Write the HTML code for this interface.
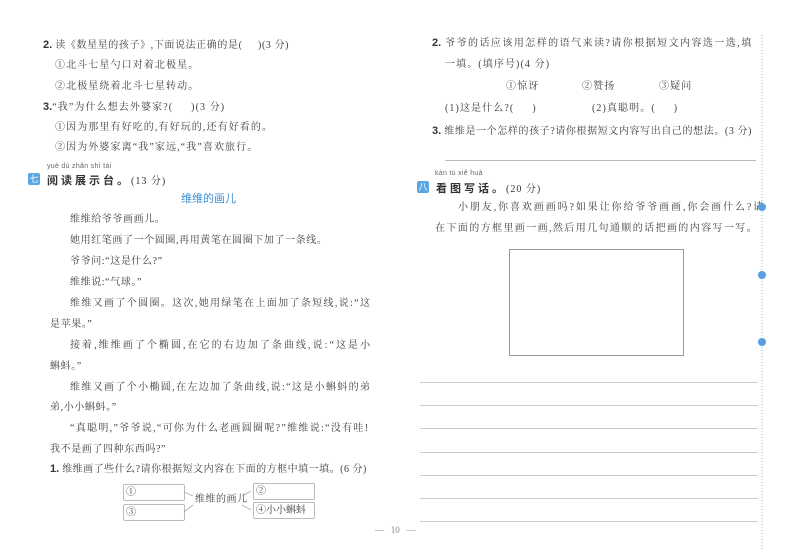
<!DOCTYPE html>
<html><head><meta charset="utf-8"><style>
body{margin:0;width:800px;height:554px;background:#fff;position:relative;overflow:hidden;font-family:"Liberation Serif","Noto Serif CJK SC",serif;color:#404040}
.t{position:absolute;white-space:nowrap;font-size:10px;line-height:12px}
.q{letter-spacing:1.1px}
.b{letter-spacing:0.6px}
.n{font-family:"Liberation Sans",sans-serif;font-weight:bold;color:#333;font-size:11px;letter-spacing:0}
.py{position:absolute;font-family:"Liberation Sans",sans-serif;font-size:7px;color:#666;white-space:nowrap;letter-spacing:0.3px}
.badge{position:absolute;width:12px;height:12px;background:#5aa6e0;color:#fff;font-size:9px;line-height:12px;text-align:center;border-radius:2px;font-family:"Noto Sans CJK SC",sans-serif}
.h{position:absolute;font-family:"Liberation Sans","Noto Sans CJK SC",sans-serif;font-weight:bold;font-size:11px;color:#333;letter-spacing:3px;white-space:nowrap}
.box{position:absolute;border:1px solid #bbb;border-radius:2px;height:15px;font-size:10px;line-height:15px;padding-left:2px}
.ln{position:absolute;left:420px;width:338px;height:1px;background:#ccc}
.dot{position:absolute;left:758px;width:8px;height:8px;border-radius:50%;background:#5a9ee0}
</style></head><body>
<div class="t q" style="left:43px;top:39px;letter-spacing:0.6px"><span class="n">2.</span> 读《数星星的孩子》,下面说法正确的是(&nbsp;&nbsp;&nbsp;&nbsp;&nbsp;)(3 分)</div>
<div class="t q" style="left:55px;top:60px">①北斗七星勺口对着北极星。</div>
<div class="t q" style="left:55px;top:81px">②北极星绕着北斗七星转动。</div>
<div class="t q" style="left:43px;top:101px"><span class="n">3.</span>“我”为什么想去外婆家?(&nbsp;&nbsp;&nbsp;&nbsp;&nbsp;)(3 分)</div>
<div class="t q" style="left:55px;top:122px">①因为那里有好吃的,有好玩的,还有好看的。</div>
<div class="t q" style="left:55px;top:142px">②因为外婆家离“我”家远,“我”喜欢旅行。</div>
<div class="py" style="left:47px;top:163px">yuè dú zhǎn shì tái</div>
<div class="badge" style="left:28px;top:173px">七</div>
<div class="h" style="left:47px;top:172px">阅读展示台。<span style="font-weight:normal;font-family:'Liberation Serif','Noto Serif CJK SC',serif;font-size:10px;letter-spacing:1px">(13 分)</span></div>
<div class="t" style="left:181px;top:193px;color:#3c8fd6;font-family:'Liberation Sans','Noto Sans CJK SC',sans-serif;font-size:11px">维维的画儿</div>
<div class="t b" style="left:70px;top:214px">维维给爷爷画画儿。</div>
<div class="t b" style="left:70px;top:235px">她用红笔画了一个圆圈,再用黄笔在圆圈下加了一条线。</div>
<div class="t b" style="left:70px;top:256px">爷爷问:“这是什么?”</div>
<div class="t b" style="left:70px;top:277px">维维说:“气球。”</div>
<div class="t b" style="left:70px;top:298px;letter-spacing:1.35px">维维又画了个圆圈。这次,她用绿笔在上面加了条短线,说:“这</div>
<div class="t b" style="left:50px;top:319px">是苹果。”</div>
<div class="t b" style="left:70px;top:340px;letter-spacing:2.05px">接着,维维画了个椭圆,在它的右边加了条曲线,说:“这是小</div>
<div class="t b" style="left:50px;top:361px">蝌蚪。”</div>
<div class="t b" style="left:70px;top:382px;letter-spacing:1.35px">维维又画了个小椭圆,在左边加了条曲线,说:“这是小蝌蚪的弟</div>
<div class="t b" style="left:50px;top:402px">弟,小小蝌蚪。”</div>
<div class="t b" style="left:70px;top:423px;letter-spacing:1.3px">“真聪明,”爷爷说,“可你为什么老画圆圈呢?”维维说:“没有哇!</div>
<div class="t b" style="left:50px;top:444px">我不是画了四种东西吗?”</div>
<div class="t" style="left:50px;top:463px;letter-spacing:0.5px"><span class="n">1.</span> 维维画了些什么?请你根据短文内容在下面的方框中填一填。(6 分)</div>
<div class="box" style="left:123px;top:484px;width:58px">①</div>
<div class="box" style="left:123px;top:504px;width:58px">③</div>
<div class="box" style="left:253px;top:483px;width:58px">②</div>
<div class="box" style="left:253px;top:502px;width:58px">④小小蝌蚪</div>
<div class="t" style="left:195px;top:494px;letter-spacing:0.5px">维维的画儿</div>
<svg style="position:absolute;left:0;top:0" width="800" height="554"><g stroke="#aaa" fill="none" stroke-width="0.8"><path d="M184 492 L193 496"/><path d="M184 512 L193 505"/><path d="M251 491 L242 496"/><path d="M251 510 L242 505"/></g>
<line x1="762" y1="35" x2="762" y2="550" stroke="#8cb8e6" stroke-dasharray="1,2"/></svg>
<div class="t" style="left:375px;top:524px;font-size:9px;color:#888">—&nbsp;&nbsp;&nbsp;10&nbsp;&nbsp;&nbsp;—</div>

<div class="t q" style="left:432px;top:37px;letter-spacing:1.45px"><span class="n">2.</span> 爷爷的话应该用怎样的语气来读?请你根据短文内容选一选,填</div>
<div class="t q" style="left:445px;top:59px">一填。(填序号)(4 分)</div>
<div class="t q" style="left:506px;top:81px">①惊讶</div>
<div class="t q" style="left:582px;top:81px">②赞扬</div>
<div class="t q" style="left:659px;top:81px">③疑问</div>
<div class="t q" style="left:445px;top:103px">(1)这是什么?(&nbsp;&nbsp;&nbsp;&nbsp;&nbsp;)</div>
<div class="t q" style="left:592px;top:103px">(2)真聪明。(&nbsp;&nbsp;&nbsp;&nbsp;&nbsp;)</div>
<div class="t q" style="left:432px;top:125px;letter-spacing:0.6px"><span class="n">3.</span> 维维是一个怎样的孩子?请你根据短文内容写出自己的想法。(3 分)</div>
<div style="position:absolute;left:445px;top:160px;width:311px;height:1px;background:#bbb"></div>
<div class="py" style="left:435px;top:170px">kàn tú xiě huà</div>
<div class="badge" style="left:417px;top:181px">八</div>
<div class="h" style="left:436px;top:180px">看图写话。<span style="font-weight:normal;font-family:'Liberation Serif','Noto Serif CJK SC',serif;font-size:10px;letter-spacing:1px">(20 分)</span></div>
<div class="t" style="left:458px;top:202px;letter-spacing:1.9px">小朋友,你喜欢画画吗?如果让你给爷爷画画,你会画什么?请</div>
<div class="t" style="left:435px;top:223px;letter-spacing:1.4px">在下面的方框里画一画,然后用几句通顺的话把画的内容写一写。</div>
<div style="position:absolute;left:509px;top:249px;width:173px;height:105px;border:1px solid #999"></div>
<div class="ln" style="top:382px"></div><div class="ln" style="top:405px"></div><div class="ln" style="top:428px"></div><div class="ln" style="top:452px"></div><div class="ln" style="top:475px"></div><div class="ln" style="top:498px"></div><div class="ln" style="top:521px"></div>
<div class="dot" style="top:203px"></div><div class="dot" style="top:271px"></div><div class="dot" style="top:338px"></div>
</body></html>
